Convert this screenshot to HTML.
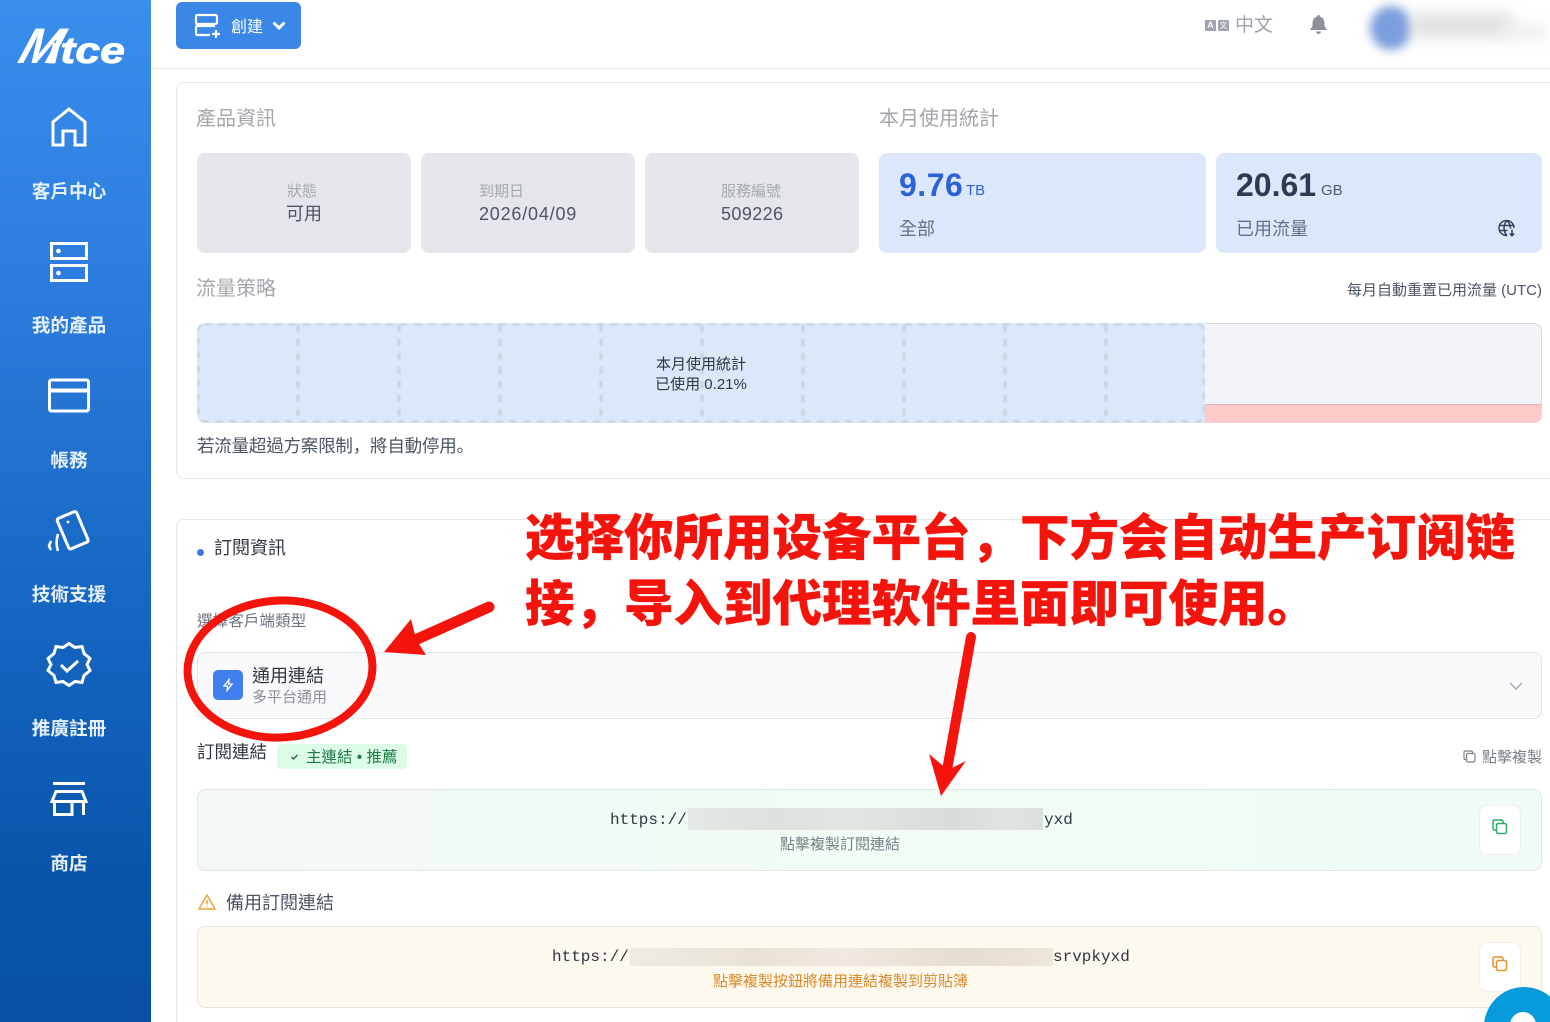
<!DOCTYPE html>
<html><head><meta charset="utf-8"><style>
html,body{margin:0;padding:0;background:#fff;overflow:hidden}
#p{position:relative;width:1550px;height:1022px;overflow:hidden;background:#fff;font-family:"Liberation Sans","Noto Sans CJK TC",sans-serif;color:#374151}
#p div,#p svg{position:absolute;box-sizing:border-box}
.t{white-space:nowrap;line-height:1.2}
.nav{left:0;width:138px;text-align:center;color:#e6f0fb;font-size:18.6px;font-weight:700;white-space:nowrap;line-height:24px}
.ic{fill:none;stroke:#fff;stroke-width:3}
.box{background:#e4e6eb;border-radius:8px;top:153px;height:100px}
.blue{background:#dbe8fb;border-radius:8px;top:153px;height:100px}
.sc{font-family:"Noto Sans CJK SC",sans-serif}
.red{font-family:"Noto Sans CJK SC",sans-serif;font-size:49.5px;font-weight:900;color:#f5140c;-webkit-text-stroke:.3px #f5140c;line-height:60px}
.mono{font-family:"Liberation Mono",monospace;font-size:16px;color:#2f3640}
</style></head><body><div id="p">
<div style="left:0;top:0;width:151px;height:1022px;background:linear-gradient(180deg,#3a8eec 0%,#2b7bdc 30%,#1566c2 60%,#0a55ab 85%,#0750a6 100%)"></div>
<svg style="left:14px;top:24px" width="114" height="44" viewBox="0 0 114 44"><text transform="translate(0 39) skewX(-28)" font-family="Liberation Sans" font-size="50" font-weight="700" fill="#fff" textLength="40" lengthAdjust="spacingAndGlyphs">M</text><text x="34" y="39" font-family="Liberation Sans" font-size="37" font-weight="700" font-style="italic" fill="#fff" stroke="#fff" stroke-width=".8" textLength="77" lengthAdjust="spacingAndGlyphs">itce</text></svg>

<svg class="ic" style="left:50px;top:107px" width="38" height="40" viewBox="0 0 38 40"><path d="M3 38V15L19 2l16 13v23H25V24H13v14z"/></svg>
<div class="nav" style="top:180px">客戶中心</div>
<svg class="ic" style="left:49px;top:241px" width="40" height="42" viewBox="0 0 40 42"><rect x="2.500" y="2.500" width="35" height="15"/><rect x="2.500" y="24.500" width="35" height="15"/><circle cx="9.500" cy="10" r="2.300" fill="#fff" stroke="none"/><circle cx="9.500" cy="32" r="2.300" fill="#fff" stroke="none"/></svg>
<div class="nav" style="top:314px">我的產品</div>
<svg class="ic" style="left:47px;top:378px" width="44" height="36" viewBox="0 0 44 36"><rect x="2.500" y="2" width="39" height="31" rx="2"/><path d="M2 12.500h40" stroke-width="4"/></svg>
<div class="nav" style="top:449px">帳務</div>
<svg class="ic" style="left:46px;top:509px" width="46" height="44" viewBox="0 0 46 44"><rect x="16" y="5" width="21" height="33" rx="2" transform="rotate(-23 26 21)"/><circle cx="22" cy="13" r="1.400" fill="#fff" stroke="none"/><path d="M5 32l-2 5 2 4M12 25c-2 6-2 11 0 17" stroke-width="2.600"/></svg>
<div class="nav" style="top:583px">技術支援</div>
<svg class="ic" style="left:46px;top:642px" width="46" height="46" viewBox="0 0 46 46"><path d="M23 2l6 4 7-1 2 7 6 5-3 6 3 6-6 5-2 7-7-1-6 4-6-4-7 1-2-7-6-5 3-6-3-6 6-5 2-7 7 1z" transform="translate(0 -0.500)"/><path d="M15 23l6 6 11-10"/></svg>
<div class="nav" style="top:717px">推廣註冊</div>
<svg class="ic" style="left:50px;top:780px" width="38" height="38" viewBox="0 0 38 38"><path d="M3 3.500h32M6 11.500h26l4 10H2zM4.500 21v13.500H22V21M33.500 21v14"/></svg>
<div class="nav" style="top:852px">商店</div>

<div style="left:151px;top:68px;width:1399px;height:1px;background:#e8e8e8"></div>
<div style="left:176px;top:2px;width:125px;height:47px;background:#3a87e8;border-radius:6px"></div>
<svg style="left:194px;top:13px" width="28" height="26" viewBox="0 0 28 26" fill="none" stroke="#fff" stroke-width="2.200"><path d="M3 2h18q2 0 2 2v5q0 2-2 2H3q-1 0-1-2V4q0-2 1-2zM21 13H3q-1 0-1 2v5q0 2 1 2h13"/><path d="M22 17v8M18 21h8"/></svg>
<div class="t" style="left:231px;top:18px;font-size:16px;color:#fff">創建</div>
<svg style="left:272px;top:20px" width="14" height="12" viewBox="0 0 14 12" fill="none" stroke="#fff" stroke-width="3"><path d="M1.500 2.500L7 8l5.500-5.500"/></svg>

<div style="left:1205px;top:20px;width:11px;height:11px;background:#9ca3af;border-radius:1px;color:#fff;font-size:9px;line-height:11px;text-align:center;font-weight:700">A</div>
<div style="left:1218px;top:20px;width:11px;height:11px;background:#9ca3af;border-radius:1px;color:#fff;font-size:8px;line-height:11px;text-align:center">文</div>
<div class="t" style="left:1235px;top:15px;font-size:19px;color:#9ca3af">中文</div>
<svg style="left:1309px;top:14px" width="19" height="21" viewBox="0 0 19 21" fill="#8c929c"><path d="M9.500 1c1 0 1.500.7 1.500 1.500C14 3.500 15.500 6 15.500 9v3l2.500 4H1l2.500-4V9c0-3 1.500-5.500 4.500-6.500C8 1.700 8.500 1 9.500 1zM7 17.500h5a2.500 2.500 0 0 1-5 0z"/></svg>
<div style="left:1370px;top:6px;width:42px;height:44px;border-radius:50%;background:#7b9edd;filter:blur(5px)"></div>
<div style="left:1412px;top:13px;width:100px;height:24px;background:#e0e0e0;filter:blur(7px)"></div>
<div style="left:1500px;top:24px;width:46px;height:16px;background:#f0f0f0;filter:blur(7px)"></div>

<div style="left:176px;top:82px;width:1374px;height:397px;border:1px solid #e6e7ea;border-right:0;border-radius:8px 0 0 8px;background:#fff"></div>
<div class="t" style="left:196px;top:107px;font-size:20px;color:#a3a6ab">產品資訊</div>
<div class="t" style="left:879px;top:107px;font-size:20px;color:#a3a6ab">本月使用統計</div>

<div class="box" style="left:197px;width:214px"></div>
<div class="box" style="left:421px;width:214px"></div>
<div class="box" style="left:645px;width:214px"></div>
<div class="t" style="left:287px;top:183px;font-size:15px;color:#a5a8ae">狀態</div>
<div class="t" style="left:286px;top:204px;font-size:18px;color:#4b5563">可用</div>
<div class="t" style="left:479px;top:183px;font-size:15px;color:#a5a8ae">到期日</div>
<div class="t" style="left:479px;top:204px;font-size:18px;letter-spacing:.8px;color:#4b5563">2026/04/09</div>
<div class="t" style="left:721px;top:183px;font-size:15px;color:#a5a8ae">服務編號</div>
<div class="t" style="left:721px;top:204px;font-size:18px;letter-spacing:.4px;color:#4b5563">509226</div>

<div class="blue" style="left:879px;width:327px;background:#dce7fb"></div>
<div class="blue" style="left:1216px;width:326px"></div>
<div class="t" style="left:899px;top:166px;font-size:32px;letter-spacing:.5px;font-weight:700;color:#2a62d9">9.76</div>
<div class="t" style="left:966px;top:182px;font-size:15px;color:#2a62d9">TB</div>
<div class="t" style="left:899px;top:219px;font-size:18px;color:#667085">全部</div>
<div class="t" style="left:1236px;top:166px;font-size:32px;font-weight:700;color:#2d3a50">20.61</div>
<div class="t" style="left:1321px;top:182px;font-size:15px;color:#4b5a70">GB</div>
<div class="t" style="left:1236px;top:219px;font-size:18px;color:#667085">已用流量</div>
<svg style="left:1498px;top:219px" width="18" height="18" viewBox="0 0 18 18" fill="none" stroke="#334155" stroke-width="1.500"><path d="M16 9a7.500 7.500 0 1 0-7 7.500M1.500 6.500h15M1.500 11.500h8M9 1.500c-4 4-4 11 0 15M9 1.500c2.500 2.500 3.500 5 3.500 8"/><path d="M14 10.500v6M11.800 14.500l2.200 2.200 2.200-2.200"/></svg>

<div class="t" style="left:196px;top:277px;font-size:20px;color:#a3a6ab">流量策略</div>
<div class="t" style="right:8px;top:282px;font-size:15px;color:#4b5563">每月自動重置已用流量 (UTC)</div>

<div style="left:197px;top:323px;width:1345px;height:100px;border-radius:8px;background:#f3f4f8;overflow:hidden;box-shadow:inset 0 0 0 1px #d8d9e0">
  <div style="left:1008px;top:81px;width:337px;height:19px;background:#fec9c9;border-top:1px solid #e9b5ba"></div>
  <div style="left:0;top:0;width:1008px;height:100px;background:#dbe8fb"></div>
  <svg style="left:0;top:0;filter:blur(.5px)" width="1008" height="100" fill="none" stroke="#cdd3e1" stroke-width="2.500" stroke-dasharray="7 7"><rect x="1.500" y="1.500" width="1005" height="97" rx="6"/><path d="M101 2V98M202 2V98M303 2V98M404 2V98M505 2V98M606 2V98M707 2V98M808 2V98M909 2V98" stroke-width="3.500"/></svg>
</div>
<div class="t" style="left:197px;top:355px;width:1008px;text-align:center;font-size:15px;line-height:20px;color:#2f3640">本月使用統計<br>已使用 0.21%</div>
<div class="t" style="left:197px;top:435px;font-size:17.500px;letter-spacing:-.2px;color:#4b5563">若流量超過方案限制<span class="sc">，</span>將自動停用<span class="sc">。</span></div>

<div style="left:176px;top:519px;width:1374px;height:503px;border:1px solid #e6e7ea;border-right:0;border-bottom:0;border-radius:8px 0 0 0;background:#fff"></div>
<div style="left:197px;top:549px;width:7px;height:7px;border-radius:50%;background:#3f78e6"></div>
<div class="t" style="left:214px;top:538px;font-size:18px;color:#2f3640">訂閱資訊</div>
<div class="t" style="left:197px;top:613px;font-size:15.600px;color:#6b7280">選擇客戶端類型</div>

<div style="left:197px;top:652px;width:1345px;height:67px;border:1px solid #e4e5e9;border-radius:8px;background:#fafafc"></div>
<div style="left:213px;top:670px;width:30px;height:30px;border-radius:5px;background:#3f80ee"></div>
<svg style="left:221px;top:678px" width="14" height="14" viewBox="0 0 14 14" fill="none" stroke="#fff" stroke-width="1.300"><path d="M8 1.500L3 8h3.500L6 12.500 11 6H7.500z"/></svg>
<div class="t" style="left:252px;top:666px;font-size:18px;color:#2f3640">通用連結</div>
<div class="t" style="left:252px;top:689px;font-size:15px;color:#8b9099">多平台通用</div>
<svg style="left:1508px;top:680px" width="16" height="12" viewBox="0 0 16 12" fill="none" stroke="#9ca3af" stroke-width="1.400"><path d="M2 3l6 6 6-6"/></svg>

<div class="t" style="left:197px;top:742px;font-size:17.500px;color:#2f3640">訂閱連結</div>
<div style="left:277px;top:744px;width:130px;height:25px;border-radius:4px;background:#dcfce7"></div>
<svg style="left:290px;top:753px" width="9" height="8" viewBox="0 0 9 8" fill="none" stroke="#166534" stroke-width="1.300"><path d="M1.500 4l2 2 4-4"/></svg>
<div class="t" style="left:306px;top:749px;font-size:15.500px;color:#1f7a46">主連結 • 推薦</div>
<svg style="left:1463px;top:750px" width="13" height="13" viewBox="0 0 13 13" fill="none" stroke="#7b8088" stroke-width="1.200"><rect x="3.500" y="3.500" width="8.500" height="8.500" rx="1.500"/><path d="M3.500 9.500H2.500q-1.500 0-1.500-1.500V2.500Q1 1 2.500 1H8q1.500 0 1.500 1.500v1"/></svg>
<div class="t" style="right:8px;top:749px;font-size:15px;color:#7b8088">點擊複製</div>

<div style="left:197px;top:789px;width:1345px;height:82px;border:1px solid #e3e6e6;border-radius:8px;background:linear-gradient(90deg,#f3f8f6,#f0fcf4 50%,#f0fbf5)"></div>
<div class="t mono" style="left:610px;top:811px">https://</div>
<div style="left:688px;top:808px;width:355px;height:22px;background:linear-gradient(90deg,#e2e8e4,#dbe2de 25%,#e1e6e2 45%,#d6dcd9 75%,#dfe5e1 90%,#d9dfdc)"></div>
<div class="t mono" style="left:1044px;top:811px">yxd</div>
<div class="t" style="left:780px;top:836px;font-size:15px;color:#7b8088">點擊複製訂閱連結</div>
<div style="left:1479px;top:805px;width:42px;height:50px;border:1px solid #eef0ef;border-radius:8px;background:#fff"></div>
<svg style="left:1492px;top:819px" width="16" height="16" viewBox="0 0 16 16" fill="none" stroke="#2ea86b" stroke-width="1.500"><rect x="4.500" y="4.500" width="10" height="10" rx="1.800"/><path d="M4.500 11H3q-2 0-2-2V3q0-2 2-2h6q2 0 2 2v1.500"/></svg>

<svg style="left:198px;top:893px" width="18" height="18" viewBox="0 0 18 18" fill="none" stroke="#eaa43c" stroke-width="1.500"><path d="M9 2L1 16h16z" stroke-linejoin="round"/><path d="M9 7v4.500M9 13v1.200"/></svg>
<div class="t" style="left:226px;top:893px;font-size:18px;color:#4b5563">備用訂閱連結</div>

<div style="left:197px;top:926px;width:1345px;height:82px;border:1px solid #e8e6e0;border-radius:8px;background:#fef9ef"></div>
<div class="t mono" style="left:552px;top:948px">https://</div>
<div style="left:630px;top:948px;width:423px;height:18px;background:linear-gradient(90deg,#f0ebe1,#e8e2d7 30%,#efe9df 50%,#e3ddd2 80%,#ece6db)"></div>
<div class="t mono" style="left:1053px;top:948px">srvpkyxd</div>
<div class="t" style="left:713px;top:973px;font-size:15px;color:#d98a2b">點擊複製按鈕將備用連結複製到剪貼簿</div>
<div style="left:1479px;top:942px;width:42px;height:50px;border:1px solid #f1efe9;border-radius:8px;background:#fff"></div>
<svg style="left:1492px;top:956px" width="16" height="16" viewBox="0 0 16 16" fill="none" stroke="#e88f2c" stroke-width="1.500"><rect x="4.500" y="4.500" width="10" height="10" rx="1.800"/><path d="M4.500 11H3q-2 0-2-2V3q0-2 2-2h6q2 0 2 2v1.500"/></svg>

<svg style="left:1484px;top:987px" width="66" height="35" viewBox="0 0 66 35"><circle cx="40" cy="40" r="40" fill="#089bdb"/><circle cx="39" cy="38" r="13" fill="#fff"/></svg>

<div class="t red" style="left:525px;top:505px">选择你所用设备平台，下方会自动生产订阅链</div>
<div class="t red" style="left:525px;top:571px">接，导入到代理软件里面即可使用。</div>

<svg style="left:0;top:0" width="1550" height="1022" viewBox="0 0 1550 1022" fill="none">
<ellipse cx="280" cy="669" rx="92.500" ry="68.500" stroke="#f5140c" stroke-width="8" transform="rotate(-3 280 669)"/>
<path d="M489 607L415 640" stroke="#f5140c" stroke-width="11" stroke-linecap="round"/>
<polygon points="384,652 411,619 416,639 426,655" fill="#f5140c"/>
<path d="M971 637L947 770" stroke="#f5140c" stroke-width="10" stroke-linecap="round"/>
<polygon points="941,796 929,754 948,770 966,761" fill="#f5140c"/>
</svg>
</div></body></html>
